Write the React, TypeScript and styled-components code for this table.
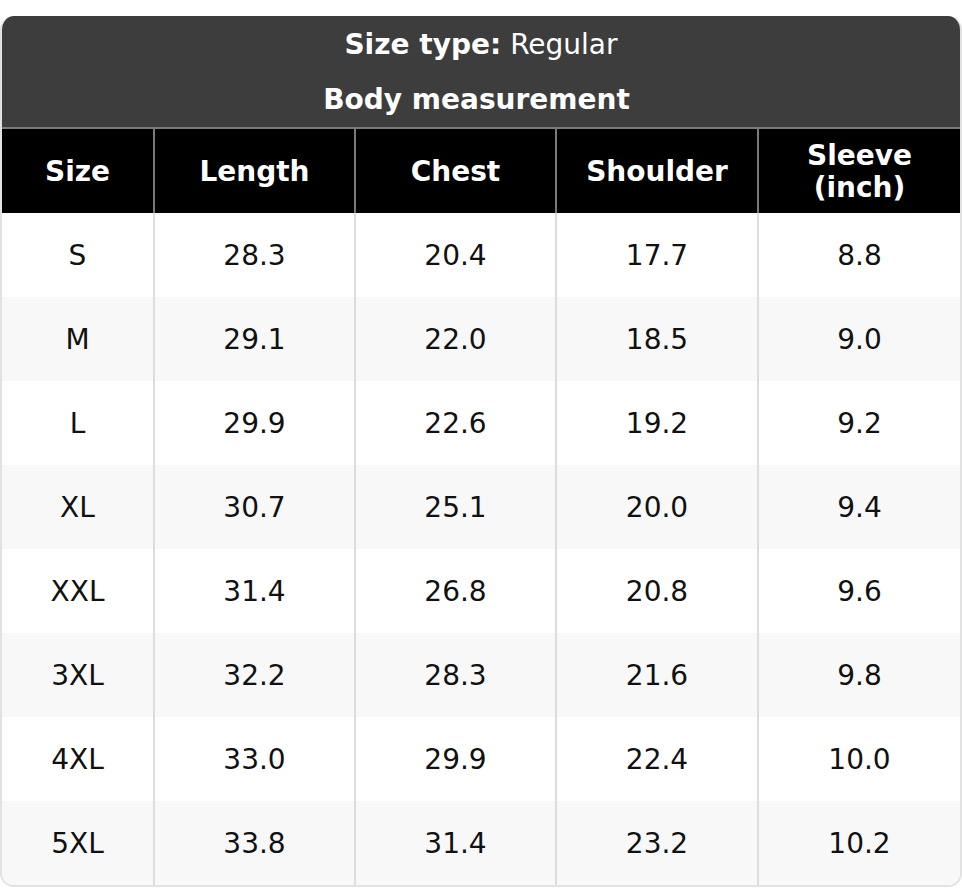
import React from "react";
import styled, { createGlobalStyle } from "styled-components";

const Global = createGlobalStyle`
  html, body { margin: 0; padding: 0; background: #fff; }
  body { font-family: "DejaVu Sans", sans-serif; }
`;

const Page = styled.div`
  padding-top: 16px;
`;

const Card = styled.div`
  width: 962px;
  box-sizing: border-box;
  border: 2px solid #e2e2e2;
  border-top: none;
  border-radius: 14px;
  overflow: hidden;
`;

const Title = styled.div`
  background: #3d3d3d;
  color: #fff;
  display: flex;
  flex-direction: column;
  align-items: center;
  border-bottom: 2px solid #7a7a7a;
  margin: 0 -2px;
`;

const TitleLine = styled.div<{ $h: number; $shift?: number }>`
  height: ${(p) => p.$h}px;
  display: flex;
  align-items: center;
  font-size: 28px;
  padding-right: ${(p) => p.$shift ?? 0}px;
`;

const B = styled.b`
  font-weight: 700;
  margin-right: 9px;
`;

const Grid = styled.div`
  display: grid;
  grid-template-columns: 153px 201px 201px 202px 1fr;
`;

const HeadCell = styled.div<{ $last?: boolean }>`
  background: #000;
  color: #fff;
  font-weight: 700;
  font-size: 28px;
  line-height: 32px;
  height: 84px;
  box-sizing: border-box;
  padding-top: 2px;
  display: flex;
  align-items: center;
  justify-content: center;
  text-align: center;
  border-right: ${(p) => (p.$last ? "none" : "2px solid #7a7a7a")};
`;

const Cell = styled.div<{ $alt: boolean; $last?: boolean }>`
  background: ${(p) => (p.$alt ? "#f8f8f8" : "#fff")};
  color: #111;
  font-size: 28px;
  height: 84px;
  display: flex;
  align-items: center;
  justify-content: center;
  border-right: ${(p) => (p.$last ? "none" : "2px solid #dcdcdc")};
`;

const headers = ["Size", "Length", "Chest", "Shoulder", "Sleeve\n(inch)"];
const rows = [
  ["S", "28.3", "20.4", "17.7", "8.8"],
  ["M", "29.1", "22.0", "18.5", "9.0"],
  ["L", "29.9", "22.6", "19.2", "9.2"],
  ["XL", "30.7", "25.1", "20.0", "9.4"],
  ["XXL", "31.4", "26.8", "20.8", "9.6"],
  ["3XL", "32.2", "28.3", "21.6", "9.8"],
  ["4XL", "33.0", "29.9", "22.4", "10.0"],
  ["5XL", "33.8", "31.4", "23.2", "10.2"],
];

export default function App() {
  return (
    <Page>
      <Global />
      <Card>
        <Title>
          <TitleLine $h={56}>
            <B>Size type:</B> Regular
          </TitleLine>
          <TitleLine $h={55} $shift={9}>
            <b>Body measurement</b>
          </TitleLine>
        </Title>
        <Grid>
          {headers.map((h, i) => (
            <HeadCell key={h} $last={i === headers.length - 1}>
              {h.includes("\n") ? (
                <span>
                  {h.split("\n")[0]}
                  <br />
                  {h.split("\n")[1]}
                </span>
              ) : (
                h
              )}
            </HeadCell>
          ))}
          {rows.map((r, ri) =>
            r.map((v, ci) => (
              <Cell key={`${ri}-${ci}`} $alt={ri % 2 === 1} $last={ci === r.length - 1}>
                {v}
              </Cell>
            ))
          )}
        </Grid>
      </Card>
    </Page>
  );
}
